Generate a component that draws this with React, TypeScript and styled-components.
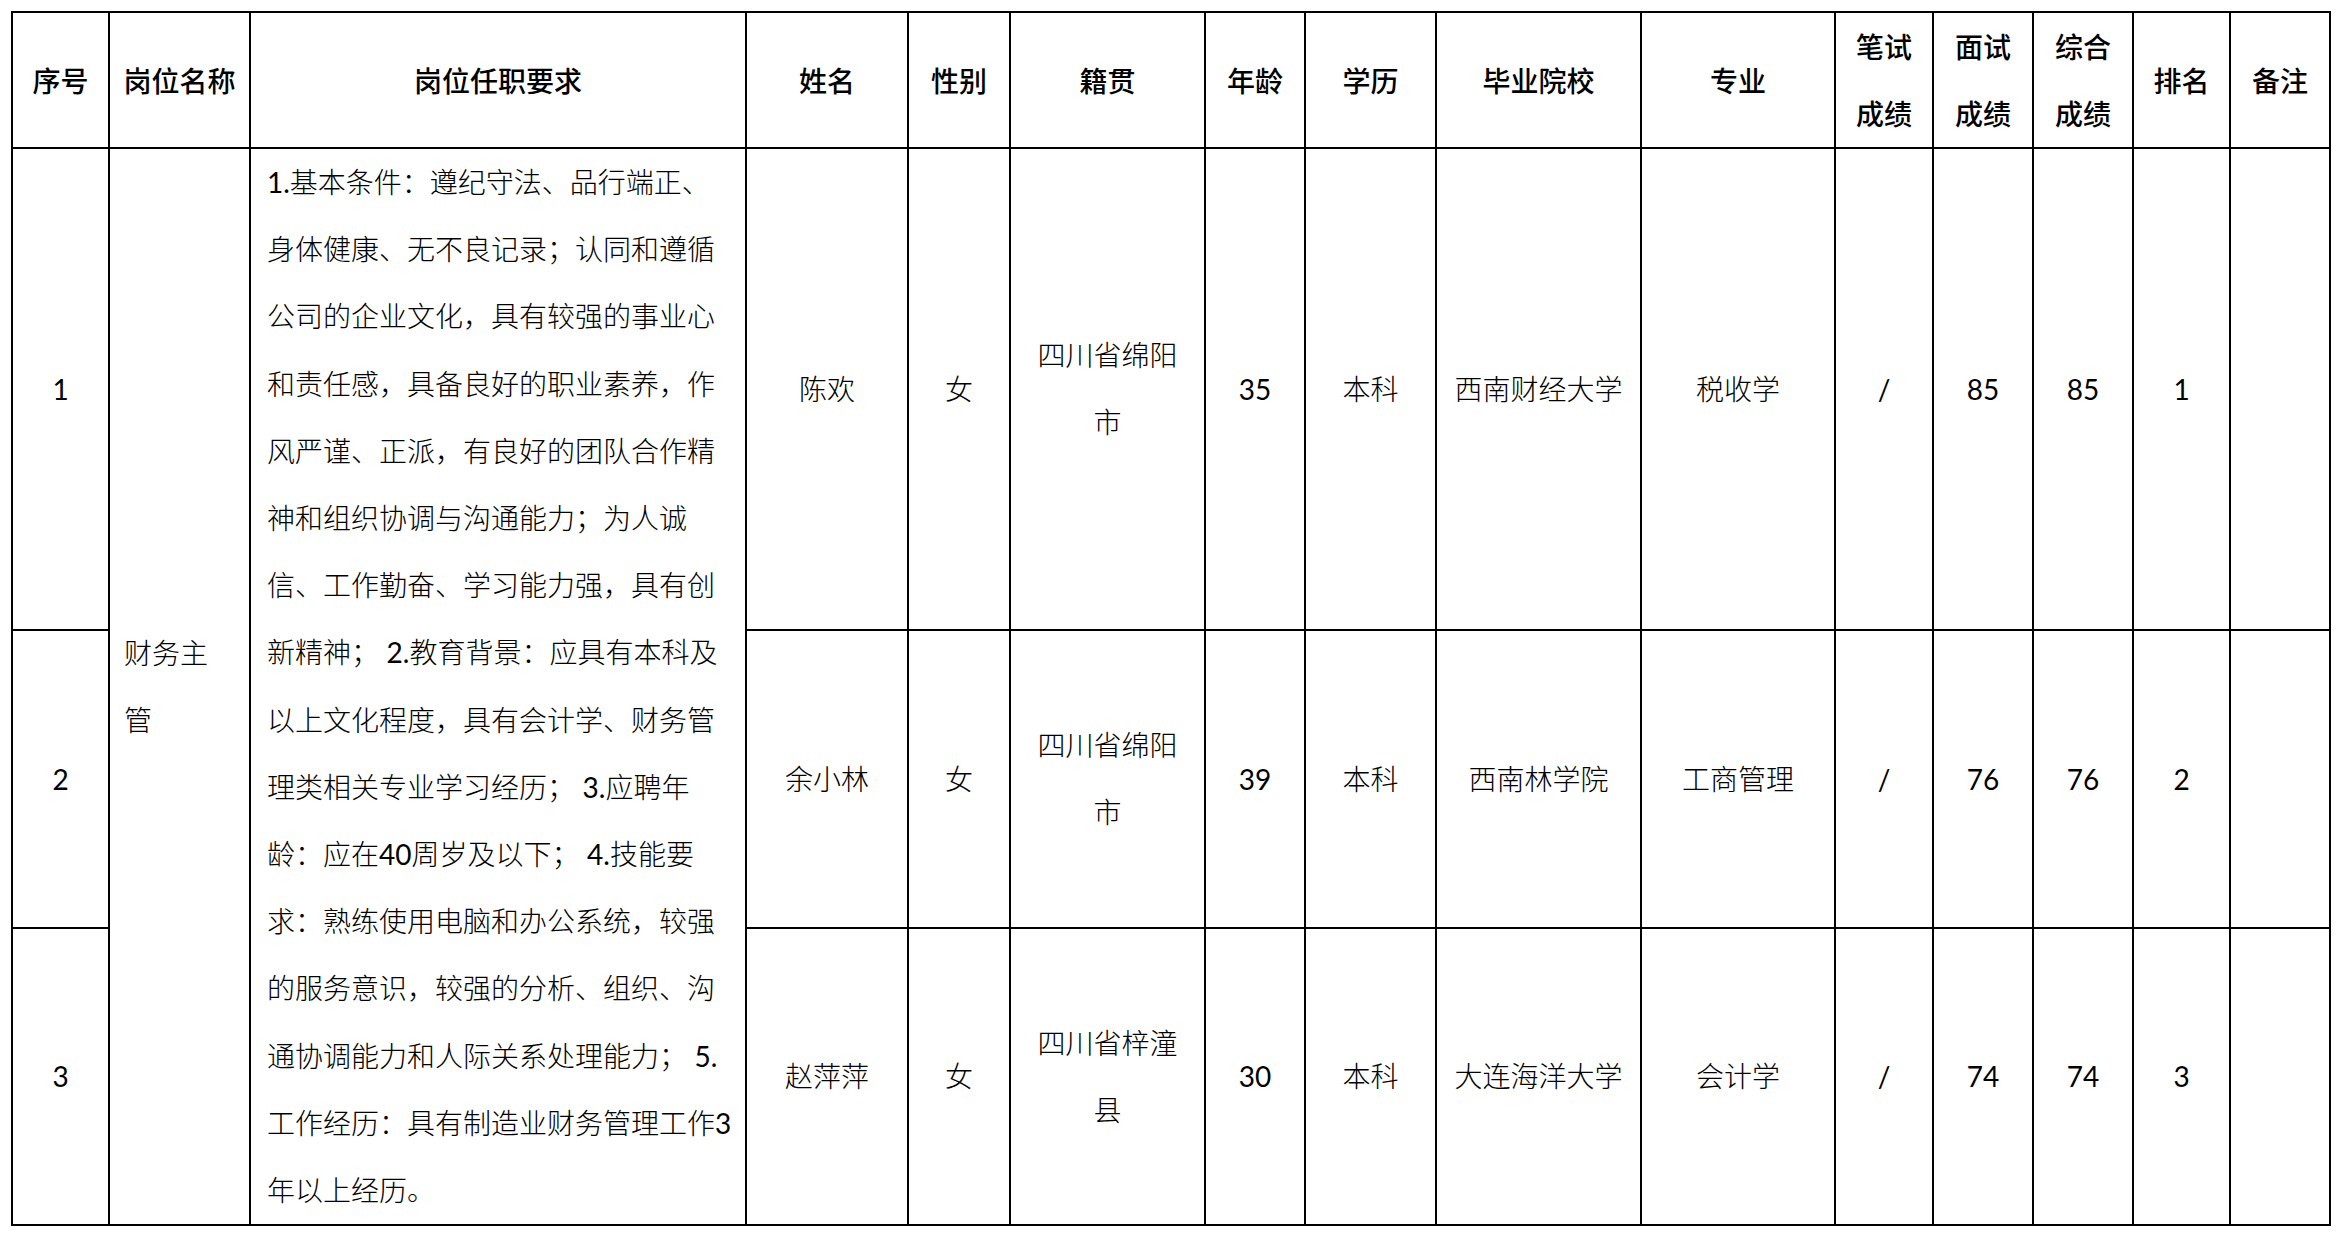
import React from 'react'
import styled, { createGlobalStyle } from 'styled-components'

const GlobalStyle = createGlobalStyle`
   html, body {
      margin: 0;
      padding: 0;
      background: #fff;
   }
`

type Row = {
   no: string
   name: string
   gender: string
   origin: string[]
   age: string
   degree: string
   school: string
   major: string
   written: string
   interview: string
   total: string
   rank: string
   note: string
}

const headers: string[][] = [
   ['序号'],
   ['岗位名称'],
   ['岗位任职要求'],
   ['姓名'],
   ['性别'],
   ['籍贯'],
   ['年龄'],
   ['学历'],
   ['毕业院校'],
   ['专业'],
   ['笔试', '成绩'],
   ['面试', '成绩'],
   ['综合', '成绩'],
   ['排名'],
   ['备注'],
]

const requirement = [
   '1.基本条件：遵纪守法、品行端正、',
   '身体健康、无不良记录；认同和遵循',
   '公司的企业文化，具有较强的事业心',
   '和责任感，具备良好的职业素养，作',
   '风严谨、正派，有良好的团队合作精',
   '神和组织协调与沟通能力；为人诚',
   '信、工作勤奋、学习能力强，具有创',
   '新精神； 2.教育背景：应具有本科及',
   '以上文化程度，具有会计学、财务管',
   '理类相关专业学习经历； 3.应聘年',
   '龄：应在40周岁及以下； 4.技能要',
   '求：熟练使用电脑和办公系统，较强',
   '的服务意识，较强的分析、组织、沟',
   '通协调能力和人际关系处理能力； 5.',
   '工作经历：具有制造业财务管理工作3',
   '年以上经历。',
]

const rows: Row[] = [
   { no: '1', name: '陈欢', gender: '女', origin: ['四川省绵阳', '市'], age: '35', degree: '本科', school: '西南财经大学', major: '税收学', written: '/', interview: '85', total: '85', rank: '1', note: '' },
   { no: '2', name: '余小林', gender: '女', origin: ['四川省绵阳', '市'], age: '39', degree: '本科', school: '西南林学院', major: '工商管理', written: '/', interview: '76', total: '76', rank: '2', note: '' },
   { no: '3', name: '赵萍萍', gender: '女', origin: ['四川省梓潼', '县'], age: '30', degree: '本科', school: '大连海洋大学', major: '会计学', written: '/', interview: '74', total: '74', rank: '3', note: '' },
]

// digits in the running text are set a little darker, as in the source sheet
const withNumbers = (text: string) =>
   text.split(/(\d+\.?)/).map((part, i) =>
      /\d/.test(part) ? <Num key={i}>{part}</Num> : <React.Fragment key={i}>{part}</React.Fragment>
   )

const App = () => {
   return (
      <Page>
         <GlobalStyle />
         <Table>
            {headers.map((h, i) => (
               <HeadCell key={i}>
                  {h.map((t) => (
                     <Line key={t}>{t}</Line>
                  ))}
               </HeadCell>
            ))}
            {rows.map((r, i) => (
               <React.Fragment key={r.no}>
                  <Cell $num>{r.no}</Cell>
                  {i === 0 && (
                     <>
                        <PostCell>
                           <Line>财务主</Line>
                           <Line>管</Line>
                        </PostCell>
                        <RequireCell>
                           {requirement.map((t) => (
                              <Line key={t}>{withNumbers(t)}</Line>
                           ))}
                        </RequireCell>
                     </>
                  )}
                  <Cell>{r.name}</Cell>
                  <Cell>{r.gender}</Cell>
                  <Cell>
                     {r.origin.map((t) => (
                        <Line key={t}>{t}</Line>
                     ))}
                  </Cell>
                  <Cell $num>{r.age}</Cell>
                  <Cell>{r.degree}</Cell>
                  <Cell>{r.school}</Cell>
                  <Cell>{r.major}</Cell>
                  <Cell $num>{r.written}</Cell>
                  <Cell $num>{r.interview}</Cell>
                  <Cell $num>{r.total}</Cell>
                  <Cell $num>{r.rank}</Cell>
                  <Cell>{r.note}</Cell>
               </React.Fragment>
            ))}
         </Table>
      </Page>
   )
}

const Page = styled.div`
   padding: 11px 0 0 11px;
   background: #fff;
`

const Table = styled.div`
   display: inline-grid;
   grid-template-columns: 95px 139px 494px 160px 100px 193px 98px 129px 203px 192px 96px 98px 98px 95px 98px;
   grid-template-rows: 134px 480px 296px 295px;
   gap: 2px;
   padding: 2px;
   background: #000;
`

const Cell = styled.div<{ $num?: boolean }>`
   background: #fff;
   display: flex;
   flex-direction: column;
   justify-content: center;
   align-items: center;
   text-align: center;
   font-family: "Lato", "Noto Sans CJK SC", sans-serif;
   font-weight: ${(p) => (p.$num ? 400 : 300)};
   font-size: 28px;
   line-height: 67px;
   color: #000;
   overflow: hidden;
`

const HeadCell = styled(Cell)`
   font-family: "Noto Sans CJK SC", sans-serif;
   font-weight: 500;
`

const PostCell = styled(Cell)`
   grid-row: span 3;
   align-items: flex-start;
   padding-left: 14px;
   text-align: left;
`

const RequireCell = styled(Cell)`
   grid-row: span 3;
   align-items: flex-start;
   justify-content: flex-start;
   padding-left: 16px;
   line-height: 67.2px;
   text-align: left;
`

const Line = styled.span`
   display: block;
   white-space: nowrap;
`

const Num = styled.span`
   font-weight: 400;
`

export default App
